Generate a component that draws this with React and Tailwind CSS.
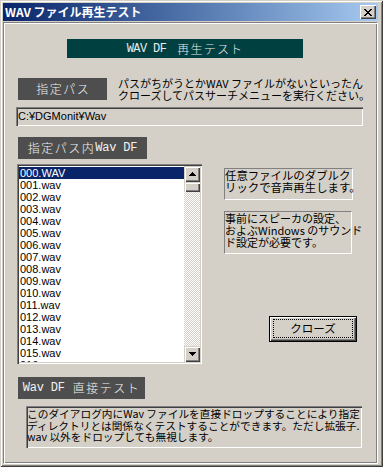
import React from "react";

function XGlyph() {
  const rows = [
    [0, 2, 6, 2],
    [1, 2, 5, 2],
    [2, 4],
    [3, 2],
    [2, 4],
    [1, 2, 5, 2],
    [0, 2, 6, 2],
  ];
  return (
    <svg width="8" height="7" viewBox="0 0 8 7" shapeRendering="crispEdges">
      {rows.map((r, y) => (
        <g key={y}>
          <rect x={r[0]} y={y} width={r[1]} height="1" fill="#000" />
          {r.length > 2 && <rect x={r[2]} y={y} width={r[3]} height="1" fill="#000" />}
        </g>
      ))}
    </svg>
  );
}

function Arrow({ down }) {
  const rows = down ? [[0, 7], [1, 5], [2, 3], [3, 1]] : [[3, 1], [2, 3], [1, 5], [0, 7]];
  return (
    <svg width="7" height="4" viewBox="0 0 7 4" shapeRendering="crispEdges">
      {rows.map((r, y) => (
        <rect key={y} x={r[0]} y={y} width={r[1]} height="1" fill="#000" />
      ))}
    </svg>
  );
}

function Label({ w, children }) {
  return (
    <div className={`${w} h-[22px] bg-[#4e4e4e] text-[#f2f2f2] flex items-center justify-center`}>
      {children}
    </div>
  );
}

export default function App() {
  const items = Array.from({ length: 17 }, (_, i) =>
    i === 0 ? "000.WAV" : String(i).padStart(3, "0") + ".wav"
  );
  return (
    <div className="w-[383px] h-[467px] bg-[#d4d0c8] pt-[3px] pl-[3px] pr-[5px] pb-[3px] flex flex-col overflow-hidden shadow-[inset_1px_1px_0_#d4d0c8,inset_-1px_-1px_0_#404040,inset_2px_2px_0_#ffffff,inset_-2px_-2px_0_#808080]">
      {/* title bar */}
      <div className="h-[18px] shrink-0 flex items-center justify-between bg-gradient-to-r from-[#0a246a] to-[#a6caf0] pl-[2px] pr-[2px]">
        <span className="text-white font-bold text-[12px] leading-none font-['Noto_Sans_CJK_JP',sans-serif] whitespace-nowrap">
          WAV ファイル再生テスト
        </span>
        <div className="w-[16px] h-[14px] bg-[#d4d0c8] flex items-center justify-center shadow-[inset_1px_1px_0_#ffffff,inset_-1px_-1px_0_#404040,inset_-2px_-2px_0_#808080]">
          <XGlyph />
        </div>
      </div>

      {/* panel */}
      <div className="mt-[1px] flex-1 border border-t-[#808080] border-l-[#808080] border-b-[#ffffff] border-r-[#ffffff] shadow-[inset_1px_1px_0_#ffffff,inset_-1px_-1px_0_#808080] p-[1px] flex flex-col">
        {/* banner */}
        <div className="mt-[15px] ml-[62px] w-[236px] h-[19px] bg-[#004040] text-[#e8ecec] flex items-center justify-center">
          <span className="font-['Liberation_Mono',monospace] text-[12px] tracking-[-0.6px] leading-none">WAV DF</span>
          <span className="ml-[11px] font-['Noto_Sans_CJK_JP',sans-serif] font-light text-[12px] tracking-[1.2px] leading-none">再生テスト</span>
        </div>

        {/* row 1 */}
        <div className="mt-[20px] ml-[13px] flex items-start">
          <Label w="w-[89px]">
            <span className="font-['Noto_Sans_CJK_JP',sans-serif] font-light text-[12px] tracking-[1.5px] leading-none pl-[1.5px]">指定パス</span>
          </Label>
          <div className="ml-[11px] -mt-[1px] font-['Noto_Sans_CJK_JP',sans-serif] text-[11px] leading-[12px] text-black whitespace-nowrap">
            <div>パスがちがうとかWAV ファイルがないといったん</div>
            <div>クローズしてパスサーチメニューを実行ください。</div>
          </div>
        </div>

        {/* path box */}
        <div className="mt-[6px] ml-[11px] w-[347px] h-[19px] pl-[2px] pt-[2px] shadow-[inset_1px_1px_0_#808080,inset_2px_2px_0_#404040,inset_-1px_-1px_0_#ffffff,inset_-2px_-2px_0_#d4d0c8] font-['Liberation_Sans',sans-serif] text-[11px] leading-[14px] text-black">
          C:¥DGMonit¥Wav
        </div>

        {/* label 2 */}
        <div className="mt-[11px] ml-[13px]">
          <Label w="w-[129px]">
            <span className="font-['Noto_Sans_CJK_JP',sans-serif] font-light text-[12px] tracking-[1.5px] leading-none">指定パス内</span>
            <span className="font-['Liberation_Mono',monospace] text-[12px] tracking-[-0.2px] leading-none">Wav DF</span>
          </Label>
        </div>

        {/* main row */}
        <div className="mt-[5px] ml-[12px] flex items-start">
          {/* listbox */}
          <div className="w-[185px] h-[200px] bg-white p-[2px] flex shadow-[inset_1px_1px_0_#808080,inset_2px_2px_0_#404040,inset_-1px_-1px_0_#ffffff,inset_-2px_-2px_0_#d4d0c8]">
            <div className="flex-1 overflow-hidden pt-[1px] font-['Liberation_Sans',sans-serif] text-[11px] leading-[12px] text-black">
              {items.map((it, i) => (
                <div
                  key={it}
                  className={i === 0 ? "h-[12px] pl-[1px] bg-[#0a246a] text-white" : "h-[12px] pl-[1px]"}
                >
                  {it}
                </div>
              ))}
            </div>
            <div className="w-[16px] flex flex-col">
              <div className="h-[16px] bg-[#d4d0c8] flex items-center justify-center shadow-[inset_1px_1px_0_#d4d0c8,inset_2px_2px_0_#ffffff,inset_-1px_-1px_0_#404040,inset_-2px_-2px_0_#808080]">
                <Arrow />
              </div>
              <div className="h-[10px] bg-[#d4d0c8] shadow-[inset_1px_1px_0_#d4d0c8,inset_2px_2px_0_#ffffff,inset_-1px_-1px_0_#404040,inset_-2px_-2px_0_#808080]" />
              <div className="flex-1 bg-[repeating-conic-gradient(#d4d0c8_0%_25%,#ffffff_0%_50%)] bg-[length:2px_2px]" />
              <div className="h-[16px] bg-[#d4d0c8] flex items-center justify-center shadow-[inset_1px_1px_0_#d4d0c8,inset_2px_2px_0_#ffffff,inset_-1px_-1px_0_#404040,inset_-2px_-2px_0_#808080]">
                <Arrow down />
              </div>
            </div>
          </div>

          {/* right column */}
          <div className="ml-[22px] mt-[4px] flex flex-col">
            <div className="w-[129px] h-[32px] border border-t-[#808080] border-l-[#808080] border-b-[#ffffff] border-r-[#ffffff] font-['Noto_Sans_CJK_JP',sans-serif] text-[11.4px] leading-[12px] text-black whitespace-nowrap">
              <div>任意ファイルのダブルク</div>
              <div>リックで音声再生します。</div>
            </div>
            <div className="mt-[11px] w-[128px] h-[43px] border border-t-[#808080] border-l-[#808080] border-b-[#ffffff] border-r-[#ffffff] font-['Noto_Sans_CJK_JP',sans-serif] text-[11px] leading-[12px] text-black whitespace-nowrap">
              <div>事前にスピーカの設定、</div>
              <div>およぶWindows のサウンド</div>
              <div>ド設定が必要です。</div>
            </div>
            <div className="mt-[62px] ml-[45px] w-[88px] h-[26px] bg-[#d4d0c8] border border-black shadow-[inset_1px_1px_0_#ffffff,inset_-1px_-1px_0_#404040,inset_-2px_-2px_0_#808080] pt-[2px] pl-[3px] pr-[3px] pb-[3px]">
              <div className="w-full h-full border border-dotted border-black flex items-center justify-center font-['Noto_Sans_CJK_JP',sans-serif] text-[11.5px] leading-none text-black">
                クローズ
              </div>
            </div>
          </div>
        </div>

        {/* label 3 */}
        <div className="mt-[13px] ml-[13px]">
          <Label w="w-[127px]">
            <span className="font-['Liberation_Mono',monospace] text-[12px] tracking-[-0.2px] leading-none">Wav DF</span>
            <span className="ml-[8px] font-['Noto_Sans_CJK_JP',sans-serif] font-light text-[12px] tracking-[1.5px] leading-none">直接テスト</span>
          </Label>
        </div>

        {/* bottom box */}
        <div className="mt-[7px] ml-[21px] w-[336px] h-[42px] pl-[1px] pt-[2px] shadow-[inset_1px_1px_0_#808080,inset_2px_2px_0_#404040,inset_-1px_-1px_0_#ffffff,inset_-2px_-2px_0_#d4d0c8] font-['Noto_Sans_CJK_JP',sans-serif] text-[10.7px] leading-[11.5px] text-black whitespace-nowrap overflow-hidden">
          <div>このダイアログ内にWav ファイルを直接ドロップすることにより指定</div>
          <div>ディレクトリとは関係なくテストすることができます。ただし拡張子.</div>
          <div>wav 以外をドロップしても無視します。</div>
        </div>
      </div>
    </div>
  );
}
